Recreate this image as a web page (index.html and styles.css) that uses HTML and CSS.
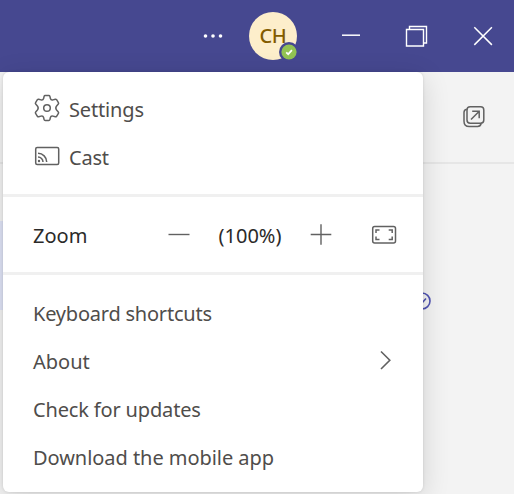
FILE: index.html
```
<!DOCTYPE html>
<html lang="en">
<head>
  <meta charset="UTF-8">
  <meta name="viewport" content="width=device-width, initial-scale=1.0">
  <title>Settings and more</title>
  <link rel="stylesheet" href="styles.css">
</head>
<body>
  <header class="titlebar">
    <button class="more" aria-label="Settings and more">
      <svg width="20" height="6" viewBox="0 0 20 6" fill="#fff">
        <circle cx="2.5" cy="3" r="1.8"/>
        <circle cx="10" cy="3" r="1.8"/>
        <circle cx="17.5" cy="3" r="1.8"/>
      </svg>
    </button>
    <div class="avatar">
      <span>CH</span>
      <svg class="status" width="20" height="20" viewBox="0 0 20 20">
        <circle cx="10" cy="10" r="10" fill="#464890"/>
        <circle cx="10" cy="10" r="7.6" fill="#92c353"/>
        <path d="M7.2 10.3l2 1.9 3.7-4" fill="none" stroke="#fff" stroke-width="1.7"/>
      </svg>
    </div>
    <div class="window-buttons">
      <button aria-label="Minimize">
        <svg width="24" height="24" viewBox="0 0 24 24"><path d="M3 11.2h18" stroke="#fff" stroke-width="1.5"/></svg>
      </button>
      <button aria-label="Restore">
        <svg width="24" height="24" viewBox="0 0 24 24" fill="none" stroke="#fff" stroke-width="1.4"><path d="M1.500 5.500h17v16.500h-17zM4.500 5.500V2.500h17V19h-3"/></svg>
      </button>
      <button aria-label="Close">
        <svg width="24" height="24" viewBox="0 0 24 24"><path d="M3.3 3.3l17.6 17.6M20.9 3.3L3.3 20.9" stroke="#fff" stroke-width="1.5"/></svg>
      </button>
    </div>
  </header>

  <main class="content">
    <div class="toolbar">
      <svg width="24" height="24" viewBox="0 0 24 24" fill="none" stroke="#616161" stroke-width="1.5">
        <rect x="5" y="1.8" width="16.8" height="16.4" rx="3.2"/>
        <path d="M4.8 4.3C3 4.7 2 5.8 2 7.5v8.7q0 5.3 5.3 5.3h8.2c2 0 3.2-1 3.7-3M9 14.5l8-8M10.2 6.2h7v7"/>
      </svg>
    </div>
    <div class="selected-chat"></div>
    <svg class="sent" width="18" height="18" viewBox="0 0 18 18" fill="none" stroke="#4f52b2" stroke-width="1.6">
      <circle cx="9" cy="9" r="8"/>
      <path d="M5 9l3 3 5-5.5"/>
    </svg>
  </main>

  <div class="menu">
    <div class="group first">
      <div class="item settings">
        <svg class="icon" width="26" height="28" viewBox="-13 -14 26 28" fill="none" stroke="#616161" stroke-width="1.5" stroke-linejoin="round">
          <path d="M-1.8-12.4H1.8Q2.7-12.4 2.9-11.6L3.4-9.4Q4-7.5 6-8.1L8.3-8.8Q9.1-9 9.600-8.300L11.400-5.400Q11.900-4.600 11.300-3.900L9.600-2Q8 0 9.600 2L11.300 3.900Q11.900 4.600 11.400 5.400L9.600 8.300Q9.100 9 8.300 8.800L6 8.100Q4 7.500 3.400 9.400L2.900 11.600Q2.700 12.400 1.800 12.400H-1.800Q-2.700 12.400-2.900 11.600L-3.400 9.400Q-4 7.500-6 8.100L-8.300 8.800Q-9.100 9-9.600 8.300L-11.400 5.400Q-11.900 4.600-11.300 3.900L-9.600 2Q-8 0-9.600-2L-11.300-3.900Q-11.900-4.600-11.400-5.400L-9.600-8.300Q-9.100-9-8.300-8.800L-6-8.100Q-4-7.500-3.400-9.400L-2.900-11.600Q-2.700-12.400-1.800-12.400Z"/>
          <circle r="3.3"/>
        </svg>
        <span>Settings</span>
      </div>
      <div class="item cast">
        <svg class="icon" width="26" height="20" viewBox="0 0 26 20" fill="none" stroke="#616161" stroke-width="1.5">
          <rect x="1.7" y="1.5" width="23" height="17" rx="1.5"/>
          <path d="M4 7.300a8.700 8.700 0 0 1 8.700 8.700M4 11a5 5 0 0 1 5 5"/>
          <circle cx="5" cy="15" r="1.2" fill="#616161" stroke="none"/>
        </svg>
        <span>Cast</span>
      </div>
    </div>

    <div class="group zoom">
      <span class="zoom-label">Zoom</span>
      <svg width="22" height="22" viewBox="0 0 22 22"><path d="M.5 10.500h21" stroke="#616161" stroke-width="1.4"/></svg>
      <span class="zoom-value">(100%)</span>
      <svg width="22" height="22" viewBox="0 0 22 22"><path d="M.7 10.500h20.600M11 .3v20.500" stroke="#616161" stroke-width="1.4"/></svg>
      <svg class="fullscreen" width="26" height="20" viewBox="0 0 26 20" fill="none" stroke="#616161" stroke-width="1.5">
        <rect x="1.7" y="1.5" width="22.8" height="16.500" rx="2"/>
        <path d="M5 8V5h3.500M17.700 5h3.500v3M21.200 11.500v3h-3.500M8.500 14.500H5v-3"/>
      </svg>
    </div>

    <div class="group last">
      <div class="item keyboard">Keyboard shortcuts</div>
      <div class="item about">
        <span>About</span>
        <svg width="14" height="20" viewBox="0 0 14 20"><path d="M2 1.500l8.800 8.700L2 19" fill="none" stroke="#616161" stroke-width="1.6"/></svg>
      </div>
      <div class="item updates">Check for updates</div>
      <div class="item download">Download the mobile app</div>
    </div>
  </div>
</body>
</html>
```
FILE: styles.css
```
* {
  box-sizing: border-box;
}

body {
  margin: 0;
  height: 494px;
  overflow: hidden;
  position: relative;
  font-family: "Noto Sans", "Open Sans", sans-serif;
  font-size: 20px;
  color: #4f4d4b;
  background-color: #f3f3f3;
}

svg {
  display: block;
  flex: none;
}

button {
  padding: 0;
  border: none;
  background: none;
}

.titlebar {
  display: flex;
  align-items: center;
  height: 72px;
  padding-left: 203px;
  background-color: #464890;
}

.avatar {
  position: relative;
  display: flex;
  align-items: center;
  justify-content: center;
  width: 48px;
  height: 48px;
  margin-left: 26px;
  padding-bottom: 2px;
  border-radius: 50%;
  background-color: #fdeecb;
  color: #835c00;
  font-weight: 500;
  letter-spacing: -0.3px;
}

.status {
  position: absolute;
  right: -2px;
  bottom: -2px;
}

.window-buttons {
  display: flex;
  gap: 42px;
  margin-left: 42px;
}

.toolbar {
  display: flex;
  justify-content: flex-end;
  align-items: center;
  height: 92px;
  padding-right: 28px;
  border-bottom: 2px solid #e6e6e6;
}

.selected-chat {
  width: 3px;
  height: 89px;
  margin-top: 57px;
  background-color: #e0e4f7;
}

/* mostly hidden behind the menu */
.sent {
  position: absolute;
  top: 292px;
  left: 413px;
}

.menu {
  position: absolute;
  top: 72px;
  left: 3px;
  width: 420px;
  height: 420px;
  border-radius: 6px;
  background-color: #fff;
  box-shadow: 0 6px 28px rgba(0, 0, 0, 0.14), 0 0 3px rgba(0, 0, 0, 0.12);
}

.group {
  padding: 0 26px 0 30px;
}

.first {
  height: 125px;
  padding-top: 13px;
  border-bottom: 3px solid #f0f0f0;
}

.item {
  display: flex;
  align-items: center;
  height: 48px;
}

.icon {
  margin: -2px 9px 0 1px;
}

.settings {
  letter-spacing: -0.15px;
}

.cast {
  letter-spacing: -0.2px;
}

.zoom {
  display: flex;
  align-items: center;
  height: 78px;
  border-bottom: 3px solid #f0f0f0;
  color: #2b2a29;
}

.zoom-label {
  width: 135px;
  padding-top: 2px;
}

.zoom-value {
  width: 120px;
  padding-top: 2px;
  text-align: center;
}

.fullscreen {
  margin-left: auto;
}

.last {
  padding-top: 14px;
}

.keyboard {
  letter-spacing: -0.22px;
}

.about {
  justify-content: space-between;
}

.about svg {
  margin: -3px 4px 0 0;
}

.updates {
  letter-spacing: -0.16px;
}

.download {
  letter-spacing: -0.05px;
}
```
